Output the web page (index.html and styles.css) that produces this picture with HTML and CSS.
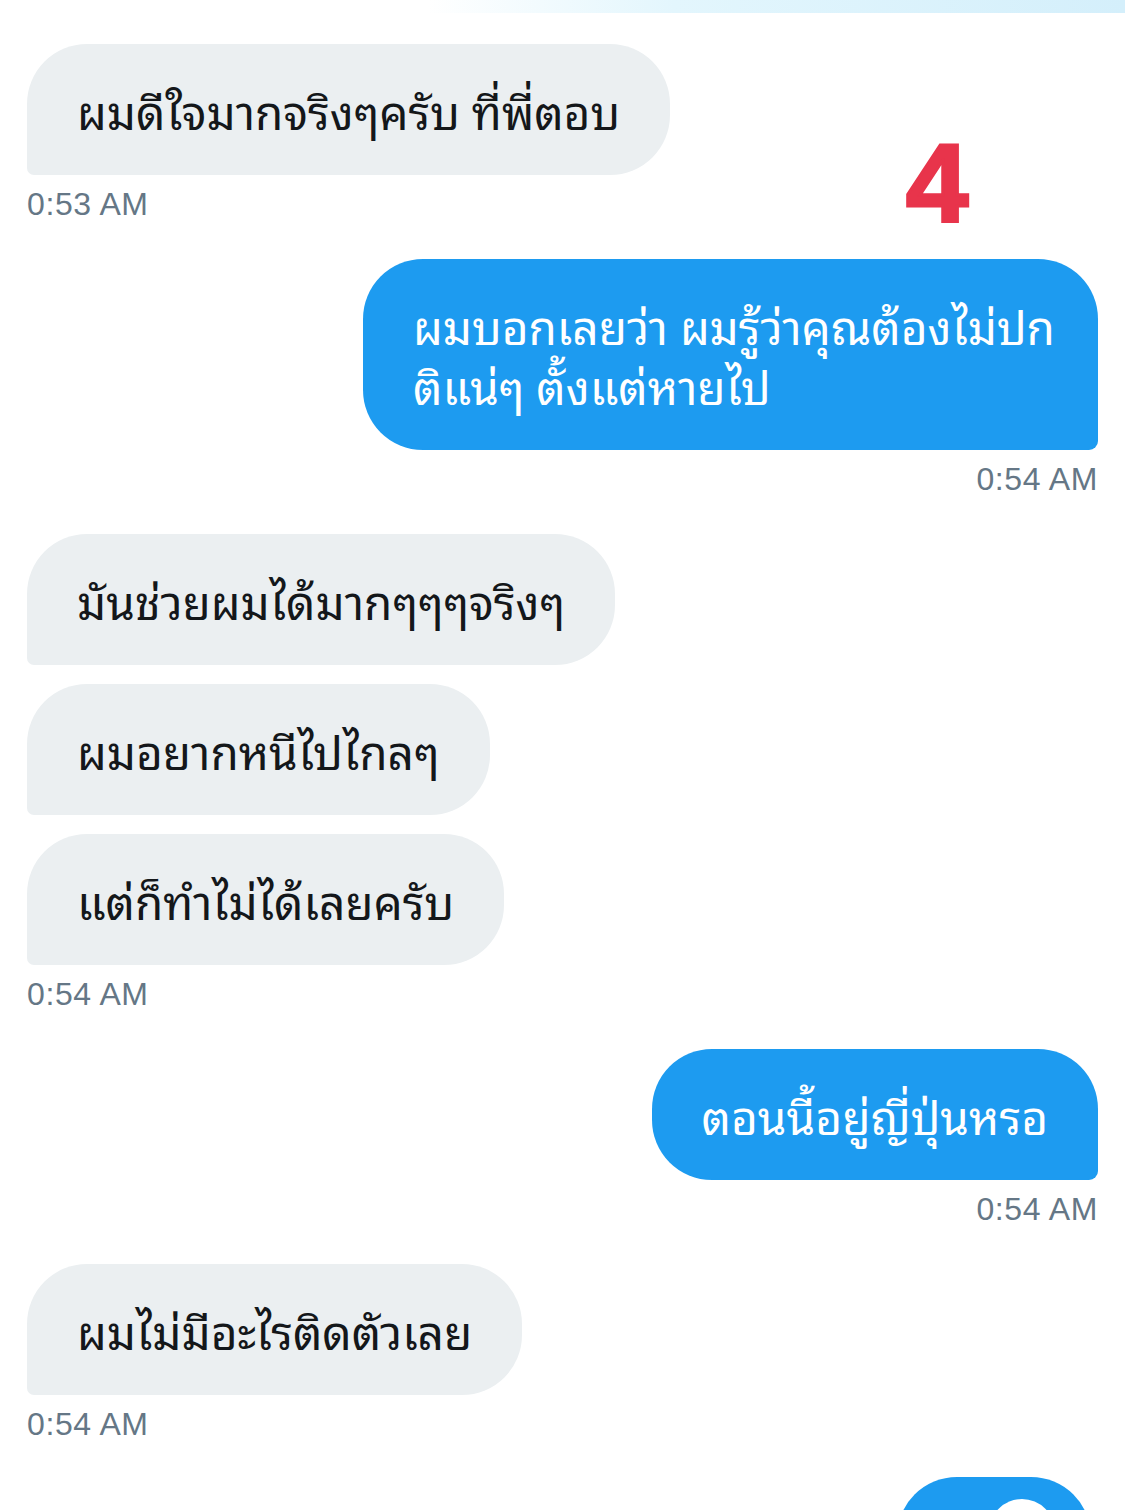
FILE: index.html
```html
<!DOCTYPE html>
<html lang="th">
<head>
<meta charset="utf-8">
<title>Messages</title>
<link rel="stylesheet" href="styles.css">
</head>
<body>
<div class="topband"></div>
<main class="chat">
  <div class="marker">4</div>

  <section class="group in">
    <div class="bubble">ผมดีใจมากจริงๆครับ ที่พี่ตอบ</div>
    <div class="time">0:53 AM</div>
  </section>

  <section class="group out">
    <div class="bubble wide">ผมบอกเลยว่า ผมรู้ว่าคุณต้องไม่ปก<br>ติแน่ๆ ตั้งแต่หายไป</div>
    <div class="time">0:54 AM</div>
  </section>

  <section class="group in">
    <div class="bubble">มันช่วยผมได้มากๆๆๆจริงๆ</div>
    <div class="bubble">ผมอยากหนีไปไกลๆ</div>
    <div class="bubble">แต่ก็ทำไม่ได้เลยครับ</div>
    <div class="time">0:54 AM</div>
  </section>

  <section class="group out">
    <div class="bubble">ตอนนี้อยู่ญี่ปุ่นหรอ</div>
    <div class="time">0:54 AM</div>
  </section>

  <section class="group in">
    <div class="bubble">ผมไม่มีอะไรติดตัวเลย</div>
    <div class="time">0:54 AM</div>
  </section>

  <section class="group out">
    <div class="bubble partial"><span class="blob"></span></div>
  </section>
</main>
</body>
</html>
```

FILE: styles.css
```css
html, body {
  margin: 0;
  padding: 0;
  background: #ffffff;
}

body {
  width: 1125px;
  height: 1510px;
  overflow: hidden;
  position: relative;
  font-family: "Noto Sans Thai Looped", "Noto Sans Thai UI Looped", "Garuda", "Loma", "Tlwg Typo", "Noto Serif Thai", "Noto Sans Thai", "Noto Sans", "Liberation Sans", sans-serif;
}

.topband {
  height: 13px;
  background: linear-gradient(90deg, rgba(214, 240, 251, 0) 38%, #e3f6fd 60%, #d4effb 100%);
}

.chat {
  position: relative;
  padding: 31px 27px 0 27px;
  display: flex;
  flex-direction: column;
  gap: 36px;
}

.marker {
  position: absolute;
  left: 906px;
  top: 115px;
  font-family: "Liberation Sans", Arial, sans-serif;
  font-weight: 700;
  font-size: 112px;
  line-height: 1;
  color: #e8344b;
  -webkit-text-stroke: 3px #e8344b;
}

.group {
  display: flex;
  flex-direction: column;
  gap: 19px;
}

.group.in {
  align-items: flex-start;
}

.group.out {
  align-items: flex-end;
}

.bubble {
  font-size: 46px;
  line-height: 60px;
  padding: 35px 50px 36px 50px;
  border-radius: 60px;
  white-space: nowrap;
}

.in .bubble {
  background: #ebeff1;
  color: #14171a;
  border-bottom-left-radius: 7px;
}

.out .bubble {
  background: #1d9bf0;
  color: #ffffff;
  border-bottom-right-radius: 9px;
}

.time {
  margin-top: -9px;
  font-family: "Liberation Sans", Arial, sans-serif;
  font-size: 32px;
  letter-spacing: 0.6px;
  line-height: 38px;
  color: #657786;
}

.bubble.wide {
  width: 635px;
}

.bubble.partial {
  width: 194px;
  height: 131px;
  padding: 0;
  margin-right: 7px;
  margin-top: -2px;
  border-radius: 60px;
  position: relative;
  overflow: hidden;
}

.blob {
  position: absolute;
  left: 92px;
  top: 22px;
  width: 66px;
  height: 66px;
  border-radius: 50%;
  background: #ffffff;
}
```
